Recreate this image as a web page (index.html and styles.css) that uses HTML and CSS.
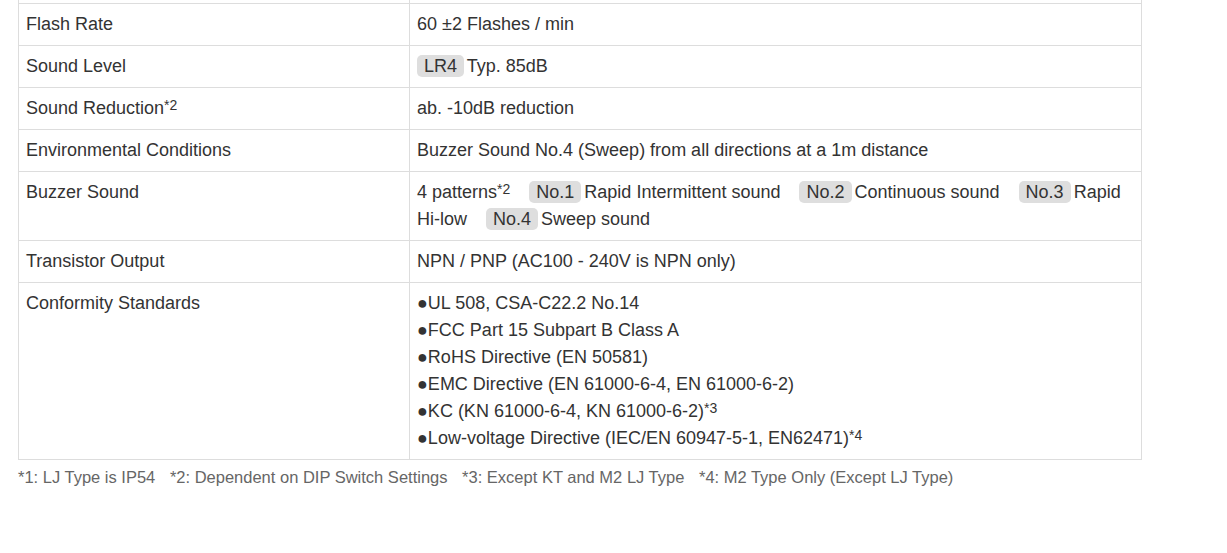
FILE: index.html
```html
<!DOCTYPE html>
<html>
<head>
<meta charset="utf-8">
<link rel="stylesheet" href="styles.css">
</head>
<body>
<div class="wrap">
<table class="spec">
<tr><td class="k">Degree of Protection</td><td>IP65*1</td></tr>
<tr><td class="k">Flash Rate</td><td>60 ±2 Flashes / min</td></tr>
<tr><td class="k">Sound Level</td><td><span class="tag first">LR4</span> Typ. 85dB</td></tr>
<tr><td class="k">Sound Reduction<sup>*2</sup></td><td>ab. -10dB reduction</td></tr>
<tr><td class="k">Environmental Conditions</td><td>Buzzer Sound No.4 (Sweep) from all directions at a 1m distance</td></tr>
<tr><td class="k">Buzzer Sound</td><td>4 patterns<sup>*2</sup> <span class="tag">No.1</span> Rapid Intermittent sound <span class="tag">No.2</span> Continuous sound <span class="tag">No.3</span> Rapid Hi-low <span class="tag">No.4</span> Sweep sound</td></tr>
<tr><td class="k">Transistor Output</td><td>NPN / PNP (AC100 - 240V is NPN only)</td></tr>
<tr><td class="k">Conformity Standards</td><td>●UL 508, CSA-C22.2 No.14<br>●FCC Part 15 Subpart B Class A<br>●RoHS Directive (EN 50581)<br>●EMC Directive (EN 61000-6-4, EN 61000-6-2)<br>●KC (KN 61000-6-4, KN 61000-6-2)<sup>*3</sup><br>●Low-voltage Directive (IEC/EN 60947-5-1, EN62471)<sup>*4</sup></td></tr>
</table>
<p class="notes"><span>*1: LJ Type is IP54</span> <span>*2: Dependent on DIP Switch Settings</span> <span>*3: Except KT and M2 LJ Type</span> <span>*4: M2 Type Only (Except LJ Type)</span></p>
</div>
</body>
</html>
```
FILE: styles.css
```css
html, body {
  margin: 0;
  padding: 0;
  background: #fff;
}
body {
  font-family: "Liberation Sans", Arial, sans-serif;
  font-size: 18px;
  color: #333;
  overflow: hidden;
}
.wrap {
  width: 1124px;
  margin-left: 18px;
  margin-top: -39px;
}
.spec {
  width: 1124px;
  border-collapse: collapse;
  table-layout: fixed;
}
.spec td {
  border: 1px solid #dddddd;
  padding: 7px;
  line-height: 27px;
  vertical-align: top;
}
.spec td.k {
  width: 376px;
}
sup {
  font-size: 14px;
  line-height: 0;
  vertical-align: 4px;
}
.tag {
  display: inline-block;
  background: #dedede;
  border-radius: 5px;
  padding: 0 7px;
  line-height: 22px;
  margin-left: 14px;
  margin-right: -2px;
}
.tag.first {
  margin-left: 0;
}
.notes {
  margin: 6px 0 0 0;
  color: #666;
  font-size: 16.5px;
  line-height: 22px;
}
.notes span {
  margin-right: 10px;
}
```
